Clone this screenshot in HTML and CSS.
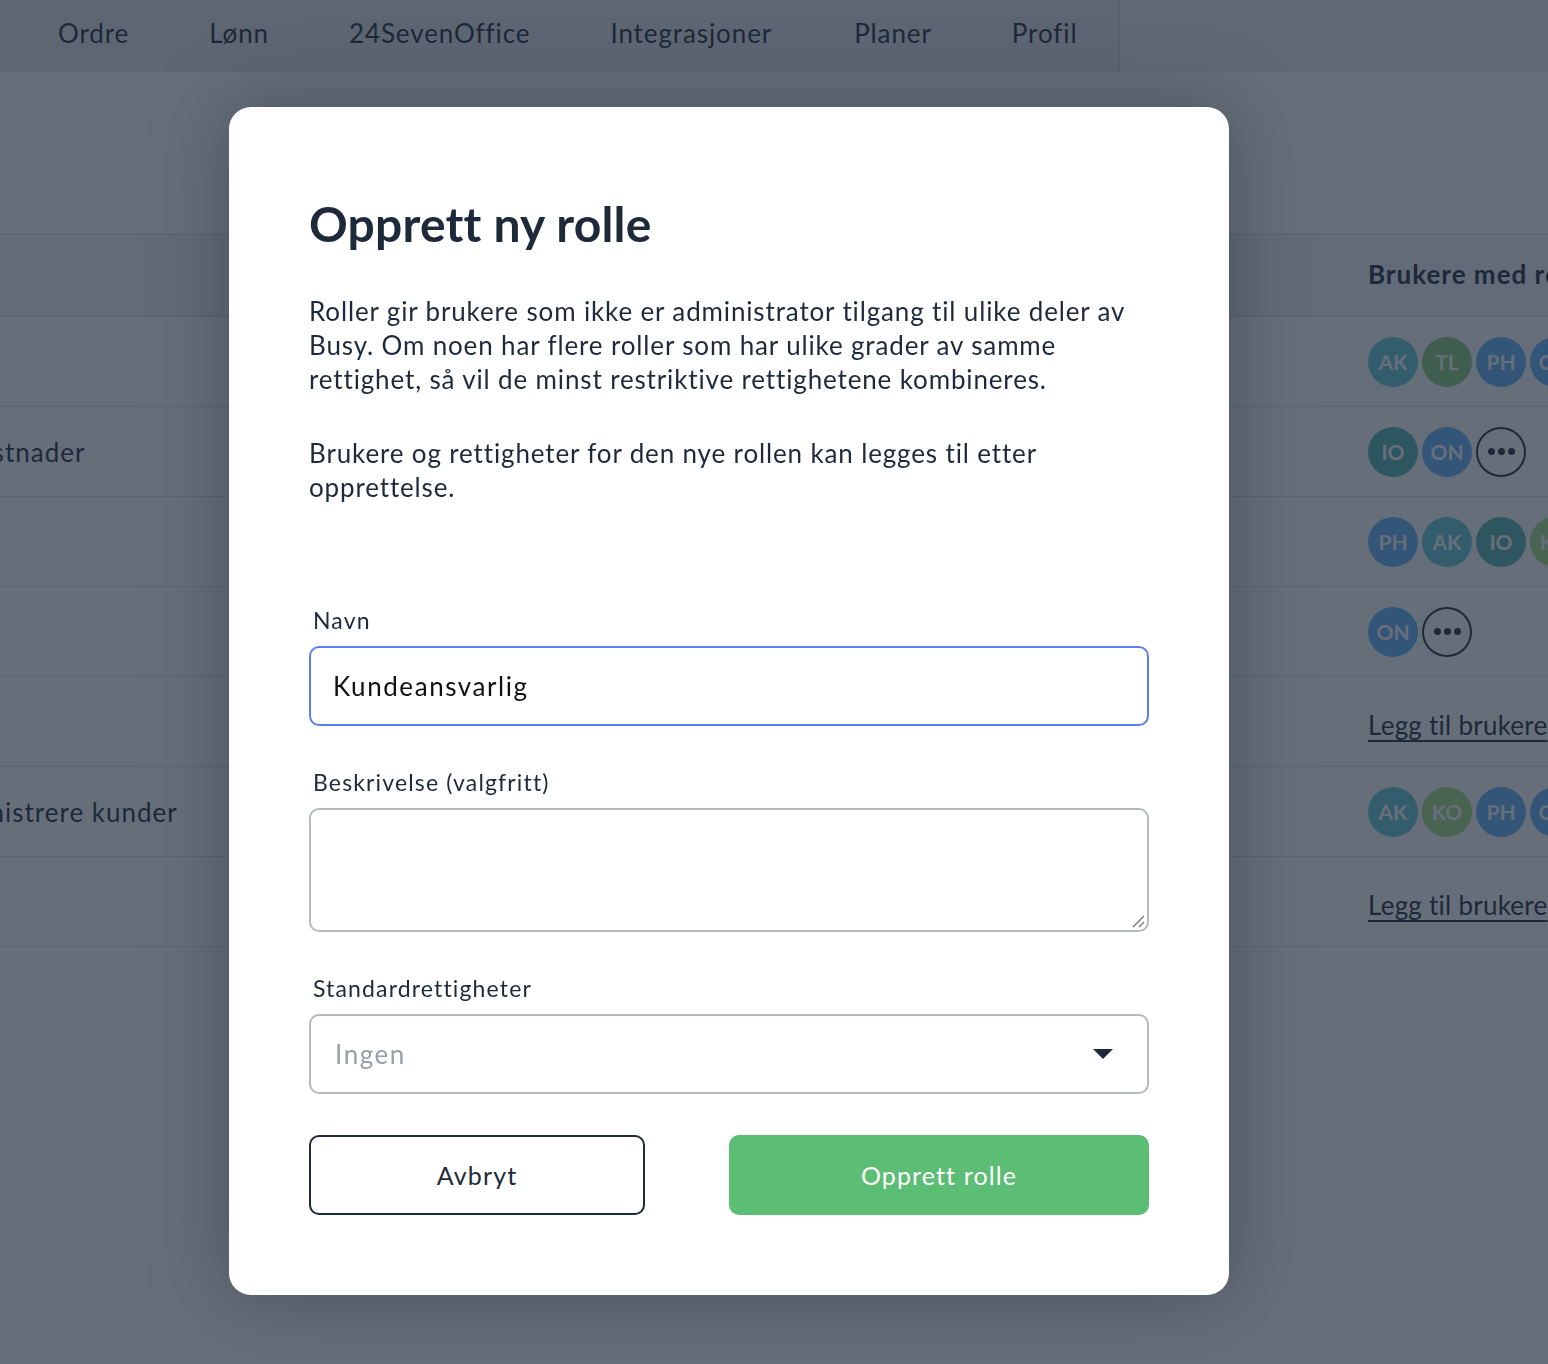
FILE: index.html
```html
<!DOCTYPE html>
<html lang="no">
<head>
<meta charset="utf-8">
<title>Opprett ny rolle</title>
<link rel="stylesheet" href="styles.css">
</head>
<body>
<div class="app">
  <nav class="topnav">
    <div class="tabs">
      <a class="tab">Ordre</a>
      <a class="tab">Lønn</a>
      <a class="tab">24SevenOffice</a>
      <a class="tab">Integrasjoner</a>
      <a class="tab">Planer</a>
      <a class="tab">Profil</a>
    </div>
  </nav>
  <main class="content">
    <div class="roles">
      <div class="row head">
        <div class="cell name">Rolle</div>
        <div class="cell users">Brukere med rollen</div>
      </div>
      <div class="row">
        <div class="cell name">Alt</div>
        <div class="cell users">
          <span class="av teal">AK</span><span class="av green">TL</span><span class="av blue">PH</span><span class="av blue">ON</span>
        </div>
      </div>
      <div class="row">
        <div class="cell name">Se kostnader</div>
        <div class="cell users">
          <span class="av dteal">IO</span><span class="av blue">ON</span><span class="more"><i></i><i></i><i></i></span>
        </div>
      </div>
      <div class="row">
        <div class="cell name">Lønn</div>
        <div class="cell users">
          <span class="av blue">PH</span><span class="av teal">AK</span><span class="av dteal">IO</span><span class="av lgreen">KO</span>
        </div>
      </div>
      <div class="row">
        <div class="cell name">Salg</div>
        <div class="cell users">
          <span class="av blue">ON</span><span class="more"><i></i><i></i><i></i></span>
        </div>
      </div>
      <div class="row">
        <div class="cell name">Tid</div>
        <div class="cell users"><a class="add">Legg til brukere</a></div>
      </div>
      <div class="row">
        <div class="cell name">Administrere kunder</div>
        <div class="cell users">
          <span class="av teal">AK</span><span class="av lgreen">KO</span><span class="av blue">PH</span><span class="av blue">ON</span>
        </div>
      </div>
      <div class="row">
        <div class="cell name">Lager</div>
        <div class="cell users"><a class="add">Legg til brukere</a></div>
      </div>
    </div>
  </main>
</div>

<div class="overlay">
  <div class="modal" role="dialog">
    <h1 class="modal-title">Opprett ny rolle</h1>
    <p class="modal-text">Roller gir brukere som ikke er administrator tilgang til ulike deler av Busy. Om noen har flere roller som har ulike grader av samme rettighet, så vil de minst restriktive rettighetene kombineres.</p>
    <p class="modal-text">Brukere og rettigheter for den nye rollen kan legges til etter opprettelse.</p>

    <form class="form">
      <label class="field">
        <span class="label">Navn</span>
        <span class="input focused">Kundeansvarlig</span>
      </label>
      <label class="field">
        <span class="label">Beskrivelse (valgfritt)</span>
        <span class="textarea"><svg class="grip" width="14" height="14" viewBox="0 0 14 14"><path d="M13 2 L2 13 M13 8 L8 13" stroke="#777" stroke-width="1.4" fill="none"/></svg></span>
      </label>
      <label class="field">
        <span class="label">Standardrettigheter</span>
        <span class="input select"><span class="placeholder">Ingen</span><svg class="caret" width="20" height="10" viewBox="0 0 20 10"><path d="M0 0 H20 L10 10 Z" fill="#1e2a3a"/></svg></span>
      </label>
      <div class="actions">
        <button type="button" class="btn secondary">Avbryt</button>
        <button type="button" class="btn primary">Opprett rolle</button>
      </div>
    </form>
  </div>
</div>
</body>
</html>
```
FILE: styles.css
```css
html, body {
  margin: 0;
  padding: 0;
  overflow: hidden;
}
body {
  font-family: "Lato", "Open Sans", sans-serif;
  color: #1e2a3a;
  background: #ffffff;
  letter-spacing: 0.045em;
}

.app {
  width: 100vw;
  height: 100vh;
  overflow: hidden;
  background: #ffffff;
}

/* top nav */
.topnav {
  height: 72px;
  background: #eceff2;
  display: flex;
}
.tabs {
  display: flex;
  align-items: center;
  height: 72px;
  padding-left: 18px;
  padding-right: 0;
  background: #e2e6e9;
  border-right: 2px solid #d2d7dc;
}
.tab {
  font-size: 26px;
  letter-spacing: 0.9px;
  padding: 0 40px;
  padding-bottom: 6px;
  color: #1e2a3a;
}
.tab:nth-child(5) {
  padding-left: 42px;
}

/* table in background */
.content {
  padding-top: 161px;
}
.roles {
  margin-left: -74px;
  width: 1900px;
  border-top: 2px solid #e4e7ea;
}
.row {
  display: grid;
  grid-template-columns: 1442px 1fr;
  height: 89px;
  border-bottom: 1px solid #dde1e5;
  align-items: center;
}
.row.head {
  height: 80px;
  background: #f3f5f7;
  border-bottom: 2px solid #e0e4e8;
  font-weight: 700;
}
.cell {
  font-size: 26px;
  letter-spacing: 1px;
}
.row.head .users {
  font-size: 26px;
  padding-bottom: 2px;
}
.users {
  display: flex;
  gap: 4px;
  align-items: center;
}
.av {
  width: 50px;
  height: 50px;
  border-radius: 50%;
  display: flex;
  align-items: center;
  justify-content: center;
  color: #ffffff;
  font-size: 21px;
  font-weight: 700;
  letter-spacing: 0;
  flex: none;
}
.teal { background: #62cbd9; }
.green { background: #86cc80; }
.blue { background: #5fb2fb; }
.dteal { background: #53b3b1; }
.lgreen { background: #a4df83; }
.more {
  width: 50px;
  height: 50px;
  box-sizing: border-box;
  border-radius: 50%;
  border: 2px solid #1e2a3a;
  display: flex;
  align-items: center;
  justify-content: center;
  gap: 3px;
  flex: none;
}
.more i {
  width: 7px;
  height: 7px;
  border-radius: 50%;
  background: #1e2a3a;
}
.add {
  font-size: 26px;
  letter-spacing: 0.25px;
  text-decoration: underline;
  text-underline-offset: 5px;
  color: #1e2a3a;
  padding-top: 6px;
}

/* overlay + modal */
.overlay {
  position: fixed;
  inset: 0;
  background: rgba(30, 42, 58, 0.68);
  display: flex;
  align-items: flex-start;
  padding: 107px 0 0 229px;
}
.modal {
  width: 1000px;
  box-sizing: border-box;
  background: #ffffff;
  border-radius: 22px;
  padding: 88px 80px 80px 80px;
  box-shadow: 0 0 80px rgba(20, 28, 40, 0.35);
}
.modal-title {
  margin: 0 0 41px;
  font-size: 48px;
  line-height: 58px;
  font-weight: 700;
  letter-spacing: 0.2px;
  color: #1e2a3a;
}
.modal-text {
  margin: 0 0 40px;
  font-size: 26px;
  line-height: 34px;
  letter-spacing: 0.033em;
  color: #1e2a3a;
}
.modal-text + .modal-text {
  margin-bottom: 0;
}
.form {
  margin-top: 103px;
  display: flex;
  flex-direction: column;
}
.field {
  display: flex;
  flex-direction: column;
  margin-bottom: 43px;
}
.field:nth-child(3) {
  margin-bottom: 41px;
}
.label {
  font-size: 23px;
  line-height: 26px;
  letter-spacing: 0.05em;
  margin: 0 0 13px 4px;
  color: #1e2a3a;
}
.input {
  height: 80px;
  box-sizing: border-box;
  border: 2px solid #b5b9be;
  border-radius: 10px;
  padding: 0 22px;
  display: flex;
  align-items: center;
  font-size: 26px;
  letter-spacing: 0.06em;
  color: #111111;
}
.input.focused {
  border-color: #5b80ee;
}
.textarea {
  height: 124px;
  box-sizing: border-box;
  border: 2px solid #b5b9be;
  border-radius: 10px;
  display: flex;
  justify-content: flex-end;
  align-items: flex-end;
  padding: 0 2px 2px 0;
}
.select {
  justify-content: space-between;
  padding: 0 34px 0 24px;
}
.placeholder {
  color: #9aa0a7;
}
.caret {
  display: block;
}
.actions {
  display: grid;
  grid-template-columns: 4fr 5fr;
  gap: 84px;
}
.btn {
  height: 80px;
  border-radius: 10px;
  font-family: inherit;
  font-size: 25px;
  letter-spacing: 0.045em;
  cursor: pointer;
}
.btn.secondary {
  background: #ffffff;
  border: 2px solid #1e2a3a;
  color: #1e2a3a;
}
.btn.primary {
  background: #5cbd74;
  border: none;
  color: #ffffff;
}
```
